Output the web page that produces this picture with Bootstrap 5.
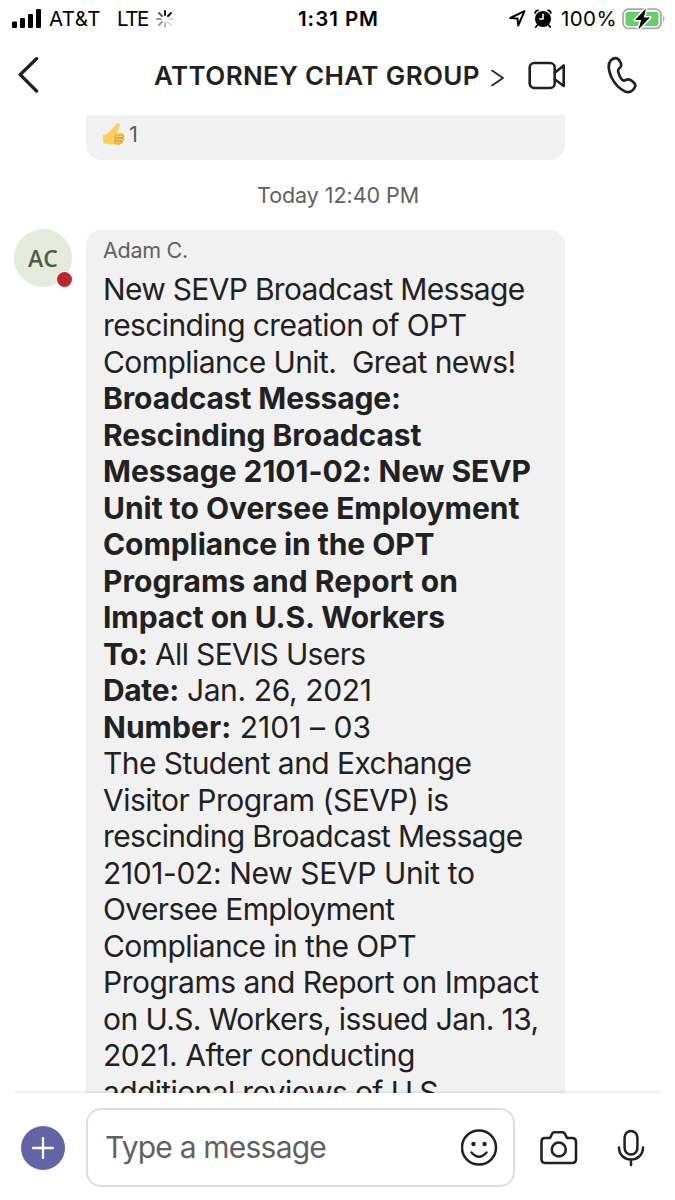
<!DOCTYPE html>
<html lang="en">
<head>
<meta charset="utf-8">
<meta name="viewport" content="width=device-width, initial-scale=1">
<title>Attorney Chat Group</title>
<link href="https://cdn.jsdelivr.net/npm/bootstrap@5.3.0/dist/css/bootstrap.min.css" rel="stylesheet">
<style>
body{font-family:Inter,"Liberation Sans",sans-serif;color:#212121;background:#fff}
svg{display:block;flex:none;fill:none;stroke:#212121;stroke-linecap:round;stroke-linejoin:round}
.phone{width:675px;height:1200px}
.status{height:37px;color:#000;font-size:20.5px;line-height:37px;padding-left:11px;padding-right:9px}
.topbar{height:78px;padding-left:17px}
.title{font-size:26px;font-weight:600;line-height:76px;margin-left:115px}
.feed{height:978px;padding-left:14px}
.bubble{width:479px;background:#f1f1f1;border-radius:15px;padding-left:17px}
.reaction{height:45px;margin-left:72px;border-radius:0 0 15px 15px;padding-left:15px;font-size:22px;line-height:39px;color:#5e5e5e}
.stamp{height:69.5px;line-height:70px;font-size:21.5px;color:#616161;padding-left:243px}
.avatar{width:58px;height:58px;margin-top:-1px;background:#e5ebdc;color:#4b6043;font:600 23px "Open Sans",sans-serif;margin-right:14px}
.presence{width:15px;height:15px;background:#b9262c;right:0;bottom:0;box-shadow:0 0 0 1px #fff}
.sender{font-size:21.5px;line-height:28px;padding-top:6px;color:#616161;height:41px}
.copy{font-size:30px;line-height:36.5px}
.copy b{font-weight:700}
.ln{display:block;width:max-content;white-space:pre}
.composer{height:107px;padding:15px 0 13px 21px}
.backing{background:#fff}
.edge{left:14px;right:14px;top:-3px;height:3px;background:linear-gradient(transparent,rgba(0,0,0,.09));border-radius:3px 3px 0 0}
.plus{width:44px;height:44px;background:#6264a7;margin-right:21px}
.entry{width:429px;height:79px;border:2px solid #dedede;border-radius:15px;padding-left:17px;padding-right:15px;font-size:30px;color:#616161;margin-right:25px}
</style>
</head>
<body>
<main class="phone d-flex flex-column overflow-hidden">
 <header>
  <div class="status d-flex align-items-center">
   <svg width="31" height="20" viewBox="0 0 31 20" style="fill:#000;stroke:none"><rect x="1" y="12.5" width="5" height="6.5" rx="1.3"/><rect x="9" y="9" width="5" height="10" rx="1.3"/><rect x="17" y="5" width="5" height="14" rx="1.3"/><rect x="25" y="0" width="5" height="19" rx="1.3"/></svg>
   <span class="ln" data-w="52" style="margin-left:7px">AT&amp;T</span>
   <span class="ln" data-w="31" style="margin-left:16px">LTE</span>
   <svg width="18" height="18" viewBox="-9 -9 18 18" stroke-width="1.9" style="margin-left:8px"><path d="M0-4V-8M3-3L6-6" stroke="#000"/><path d="M4 0H8M3 3L6 6" style="stroke:#ddd"/><path d="M0 4V8" style="stroke:#bbb"/><path d="M-3 3L-6 6M-4 0H-8" style="stroke:#999"/><path d="M-3-3L-6-6" style="stroke:#555"/></svg>
   <span class="ln fw-semibold" data-w="81" style="margin-left:124px">1:31 PM</span>
   <svg class="ms-auto" width="17" height="17" viewBox="0 0 17 17" stroke-width="2"><path d="M1.3 8L15.5 1.2 9.2 15.5 8.5 8.6Z" style="stroke:#000"/></svg>
   <svg width="18" height="19" viewBox="0 0 18 19" style="margin-left:8px;stroke:#000"><circle cx="9" cy="10" r="8" fill="#000" stroke="none"/><path d="M1.2 4Q1.5 1.5 4 1.3M16.8 4Q16.5 1.5 14 1.3M3.5 16L1.8 18M14.5 16l1.7 2" stroke-width="1.8"/><path d="M9 5.3V10H5.7" style="stroke:#fff" stroke-width="1.6"/></svg>
   <span class="ln" data-w="56" style="margin-left:9px">100%</span>
   <svg width="44" height="22" viewBox="0 0 44 22" style="margin-left:5px"><rect x="1" y="1.2" width="38" height="19.2" rx="5.5" style="stroke:#aaa" stroke-width="1.8"/><rect x="3.5" y="3.7" width="33" height="14.2" rx="3" fill="#65cf67" stroke="none"/><path d="M41 7.7q3 3.2 0 6.4z" fill="#aaa" stroke="none"/><path d="M24 .5L13 12h6.2L16.4 21.5 28 9.6H21.8Z" fill="#000" style="stroke:#fff;paint-order:stroke" stroke-width="3"/></svg>
  </div>
  <div class="topbar d-flex align-items-center">
   <svg width="22" height="36" viewBox="0 0 22 36" stroke-width="3.4" style="margin-top:-2px"><path d="M19.5 1.7L3.2 17.6 19.5 34"/></svg>
   <div class="title"><span class="ln" data-w="326">ATTORNEY CHAT GROUP</span></div>
   <svg width="13" height="18" viewBox="0 0 13 18" stroke-width="1.6" style="margin-left:11px;margin-top:3px"><path d="M1 1.5L12 9 1 16.5"/></svg>
   <svg width="38" height="30" viewBox="0 0 38 30" stroke-width="2.6" style="margin-left:24px"><rect x="1.7" y="2" width="25" height="25" rx="4.5"/><path d="M27 11.5L35.7 4.5V25L27 18.5"/></svg>
   <svg width="30" height="38" viewBox="0 0 30 38" stroke-width="2.7" style="margin-left:41px;margin-top:-2px"><path d="M4 4.2Q8 .6 11.3 3.2Q14.2 6 14.2 9.5Q13.7 11.4 12 12.6Q10.6 14 11.4 16.5Q12.5 20.8 15 23.7Q16.4 25.2 18.8 24Q21.5 22.8 23.8 24.2Q29.5 28 28 31Q24.5 37.8 18 35.4Q9.5 31.5 4.5 21.5Q-.8 9.5 4 4.2Z"/></svg>
  </div>
 </header>
 <section class="feed overflow-hidden">
  <div class="bubble reaction d-flex">
   <svg width="24" height="24" viewBox="0 0 24 24" style="margin-top:7px;margin-left:1px"><path d="M1 13Q4 13 8 9L13 4Q15 0 17 1.5T16 8L15 11H20Q23 12 22 15L21 20Q20 23 16 22.5H8L1 21Z" fill="#fbcf58" stroke="none"/><path d="M14 13h7q2 1 0 3h-7M14 16h7q1 2-.5 3H13M14 19h5q2 2-1 3h-4M13 14v7" style="stroke:#c79436" stroke-width=".8"/></svg><span style="margin-left:3px">1</span>
  </div>
  <div class="stamp"><span class="ln" data-w="162">Today 12:40 PM</span></div>
  <article class="d-flex">
   <div class="avatar rounded-circle position-relative d-flex align-items-center justify-content-center flex-shrink-0">AC<span class="presence position-absolute rounded-circle"></span></div>
   <div class="bubble">
    <div class="sender"><span class="ln" data-w="85">Adam C.</span></div>
    <div class="copy">
     <span class="ln" data-w="421.5">New SEVP Broadcast Message</span>
     <span class="ln" data-w="363.5">rescinding creation of OPT</span>
     <span class="ln" data-w="412.5">Compliance Unit.  Great news!</span>
     <b class="ln" data-w="298">Broadcast Message:</b>
     <b class="ln" data-w="318.5">Rescinding Broadcast</b>
     <b class="ln" data-w="428">Message 2101-02: New SEVP</b>
     <b class="ln" data-w="416.5">Unit to Oversee Employment</b>
     <b class="ln" data-w="331.5">Compliance in the OPT</b>
     <b class="ln" data-w="355">Programs and Report on</b>
     <b class="ln" data-w="342">Impact on U.S. Workers</b>
     <span class="ln" data-w="262.5"><b>To:</b> All SEVIS Users</span>
     <span class="ln" data-w="268.5"><b>Date:</b> Jan. 26, 2021</span>
     <span class="ln" data-w="268"><b>Number:</b> 2101 – 03</span>
     <span class="ln" data-w="368.5">The Student and Exchange</span>
     <span class="ln" data-w="345.5">Visitor Program (SEVP) is</span>
     <span class="ln" data-w="419.5">rescinding Broadcast Message</span>
     <span class="ln" data-w="371.5">2101-02: New SEVP Unit to</span>
     <span class="ln" data-w="291.5">Oversee Employment</span>
     <span class="ln" data-w="313">Compliance in the OPT</span>
     <span class="ln" data-w="435.5">Programs and Report on Impact</span>
     <span class="ln" data-w="435.5">on U.S. Workers, issued Jan. 13,</span>
     <span class="ln" data-w="312">2021. After conducting</span>
     <span class="ln" data-w="343">additional reviews of U.S.</span>
    </div>
   </div>
  </article>
 </section>
 <footer class="backing position-relative">
  <div class="edge position-absolute"></div>
  <div class="composer d-flex align-items-center">
   <div class="plus rounded-circle d-flex align-items-center justify-content-center"><svg width="22" height="22" viewBox="0 0 22 22" style="stroke:#fff" stroke-width="2.3"><path d="M11 1V21M1 11H21"/></svg></div>
   <div class="entry d-flex align-items-center justify-content-between"><span class="ln" data-w="221">Type a message</span>
    <svg width="37" height="37" viewBox="0 0 37 37" stroke-width="2.5"><circle cx="18" cy="18.5" r="17"/><circle cx="12.5" cy="15" r="2.2" fill="#212121" stroke="none"/><circle cx="23.5" cy="15" r="2.2" fill="#212121" stroke="none"/><path d="M10.5 23.5Q18 32 25.5 23.5"/></svg>
   </div>
   <svg width="38" height="36" viewBox="0 0 38 36" stroke-width="2.6"><path d="M5 8H10L12.3 3.5Q13 2.3 14.5 2.3H22.5Q24 2.3 24.7 3.5L27 8H32Q36 8 36 12V29Q36 33 32 33H5Q1.5 33 1.5 29V12Q1.5 8 5 8Z"/><circle cx="18.8" cy="19.5" r="7"/></svg>
   <svg width="28" height="38" viewBox="0 0 28 38" stroke-width="2.5" style="margin-left:39px"><rect x="7.6" y="2" width="12.8" height="23.5" rx="6.4"/><path d="M2 18.5C2 34.5 26 34.5 26 18.5M14 30.5V36"/></svg>
  </div>
 </footer>
</main>
<script src="https://cdn.jsdelivr.net/npm/bootstrap@5.3.0/dist/js/bootstrap.bundle.min.js"></script>
<script>
// Track each line so that it fills its own measure.
document.querySelectorAll('.ln[data-w]').forEach(el => {
  const gap = (+el.dataset.w - el.getBoundingClientRect().width) / el.textContent.length;
  el.style.letterSpacing = gap.toFixed(3) + 'px';
});
</script>
</body>
</html>
